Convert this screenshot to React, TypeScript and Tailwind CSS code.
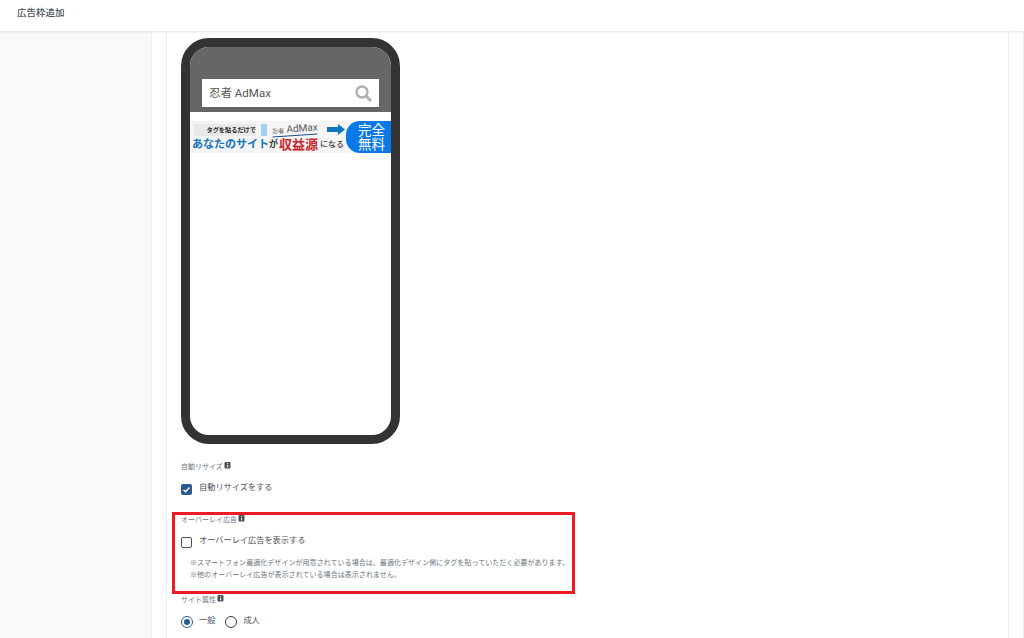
const font = "font-['Roboto','Noto_Sans_CJK_JP',sans-serif]";

function Help() {
  return (
    <svg width="7" height="7" viewBox="0 0 7 7" className="mb-[4px] ml-[1px] shrink-0">
      <rect x="0.5" y="0" width="6" height="6.5" rx="1" fill="#495057" />
      <rect x="3" y="1" width="1.200" height="1.200" fill="#dfe2e5" />
      <rect x="3" y="3" width="1.200" height="2.400" fill="#dfe2e5" />
    </svg>
  );
}

function Label({ text }: { text: string }) {
  return (
    <div className="flex items-center h-[12px] text-[7px] leading-[12px] text-[#6c757d]">
      {text}
      <Help />
    </div>
  );
}

function Banner() {
  return (
    <div className="mt-[9px] h-[32px] flex bg-[#f5f5f5] overflow-hidden">
      <div className="flex-1 flex flex-col min-w-0">
        <div className="h-[17px] flex items-center pl-[4px]">
          <div className="w-[62px] h-[12px] bg-[#e8e8e8] text-[6.200px] leading-[12px] font-bold text-[#222] text-right whitespace-nowrap">
            タグを貼るだけで
          </div>
          <div className="w-[6px] h-[12px] ml-[5px] bg-[#9fd0f5]" />
          <div className="ml-[5px] w-[45px] text-[10px] leading-[11px] text-[#555] border-b border-[#1c4f8f] whitespace-nowrap -rotate-[4deg]">
            <span className="text-[6px]">忍者</span> AdMax
          </div>
          <svg width="18" height="11" viewBox="0 0 18 11" className="ml-[10px] shrink-0">
            <path d="M0 3h11V0l7 5.500-7 5.500V8H0z" fill="#0f75bc" />
          </svg>
        </div>
        <div className="h-[15px] -mt-[1px] flex items-center pl-[2px] leading-[15px] font-bold whitespace-nowrap">
          <span className="text-[11px] text-[#1272bb]">あなたのサイト</span>
          <span className="text-[9px] text-[#333]">が</span>
          <span className="text-[13px] text-[#c8282d] ml-[1px]">収益源</span>
          <span className="text-[8px] text-[#333] ml-[2px] font-medium">になる</span>
        </div>
      </div>
      <div className="w-[45px] shrink-0 rounded-l-[14px] bg-[#0a78e6] text-white text-[13.500px] leading-[14px] flex flex-col items-center justify-center pl-[6px]">
        <span>完全</span>
        <span>無料</span>
      </div>
    </div>
  );
}

function Phone() {
  return (
    <div className="w-[219px] h-[406px] border-[9px] border-[#333333] rounded-[28px] bg-white overflow-hidden">
      <div className="h-[65px] bg-[#666666] px-[12px] pt-[32px]">
        <div className="h-[28px] bg-white flex items-center justify-between pl-[7px] pr-[7px]">
          <span className="pt-[2px] text-[11.500px] text-[#555]">忍者 AdMax</span>
          <svg width="17" height="17" viewBox="0 0 17 17" fill="none" stroke="#b0b0b0">
            <circle cx="7" cy="7" r="5.500" strokeWidth="2.400" />
            <path d="M11 11l5 5" strokeWidth="3" />
          </svg>
        </div>
      </div>
      <Banner />
    </div>
  );
}

export default function App() {
  return (
    <div className={`${font} h-[638px] overflow-hidden bg-[#f8f9fa]`}>
      <header className="h-[31px] bg-white shadow-[0_1px_3px_rgba(0,0,0,0.1)] relative z-10 flex items-center pl-[17px] pb-[5px]">
        <h1 className="text-[9.500px] font-medium text-[#495057]">広告枠追加</h1>
      </header>
      <div className="flex h-[607px]">
        <div className="w-[152px] shrink-0 border-r border-[#eceef0]" />
        <section className="flex-1 bg-white px-[14px] border-r border-[#eceef0]">
          <main className="h-full bg-white border-x border-[#eceef0] pl-[14px] pt-[7px]">
            <Phone />

            <div className="mt-[17px]">
              <Label text="自動リサイズ" />
            </div>
            <label className="mt-[8px] flex items-center h-[16px]">
              <span className="w-[11px] h-[11px] rounded-[2px] bg-[#2a5a8f] flex items-center justify-center">
                <svg width="9" height="9" viewBox="0 0 9 9" fill="none">
                  <path d="M1.500 4.700l2 2 4-4.300" stroke="#fff" strokeWidth="1.400" />
                </svg>
              </span>
              <span className="ml-[7px] pb-[4px] text-[8.200px] text-[#495057]">自動リサイズをする</span>
            </label>

            <div className="mt-[15px] w-[403px] h-[82px] -ml-[9px] pl-[6px] border-[3px] border-[#ed1c24]">
              <div className="-mt-[1px]">
                <Label text="オーバーレイ広告" />
              </div>
              <label className="mt-[8px] flex items-center h-[16px]">
                <span className="w-[11px] h-[11px] rounded-[2px] border-[1.500px] border-[#495057] bg-white" />
                <span className="ml-[7px] pb-[4px] text-[8.200px] text-[#495057]">オーバーレイ広告を表示する</span>
              </label>
              <div className="mt-[7px] ml-[9px] text-[7.050px] leading-[12px] text-[#6c757d] whitespace-nowrap">
                <p>※スマートフォン最適化デザインが用意されている場合は、最適化デザイン側にタグを貼っていただく必要があります。</p>
                <p>※他のオーバーレイ広告が表示されている場合は表示されません。</p>
              </div>
            </div>

            <Label text="サイト属性" />
            <div className="mt-[8px] flex items-center h-[16px] text-[8.200px] text-[#495057]">
              <span className="w-[12px] h-[12px] rounded-full border-[1.500px] border-[#2a5a8f] flex items-center justify-center">
                <span className="w-[6px] h-[6px] rounded-full bg-[#2a5a8f]" />
              </span>
              <span className="ml-[6px] pb-[3px]">一般</span>
              <span className="ml-[10px] w-[12px] h-[12px] rounded-full border-[1.500px] border-[#343a40]" />
              <span className="ml-[6px] pb-[3px]">成人</span>
            </div>
          </main>
        </section>
      </div>
    </div>
  );
}
